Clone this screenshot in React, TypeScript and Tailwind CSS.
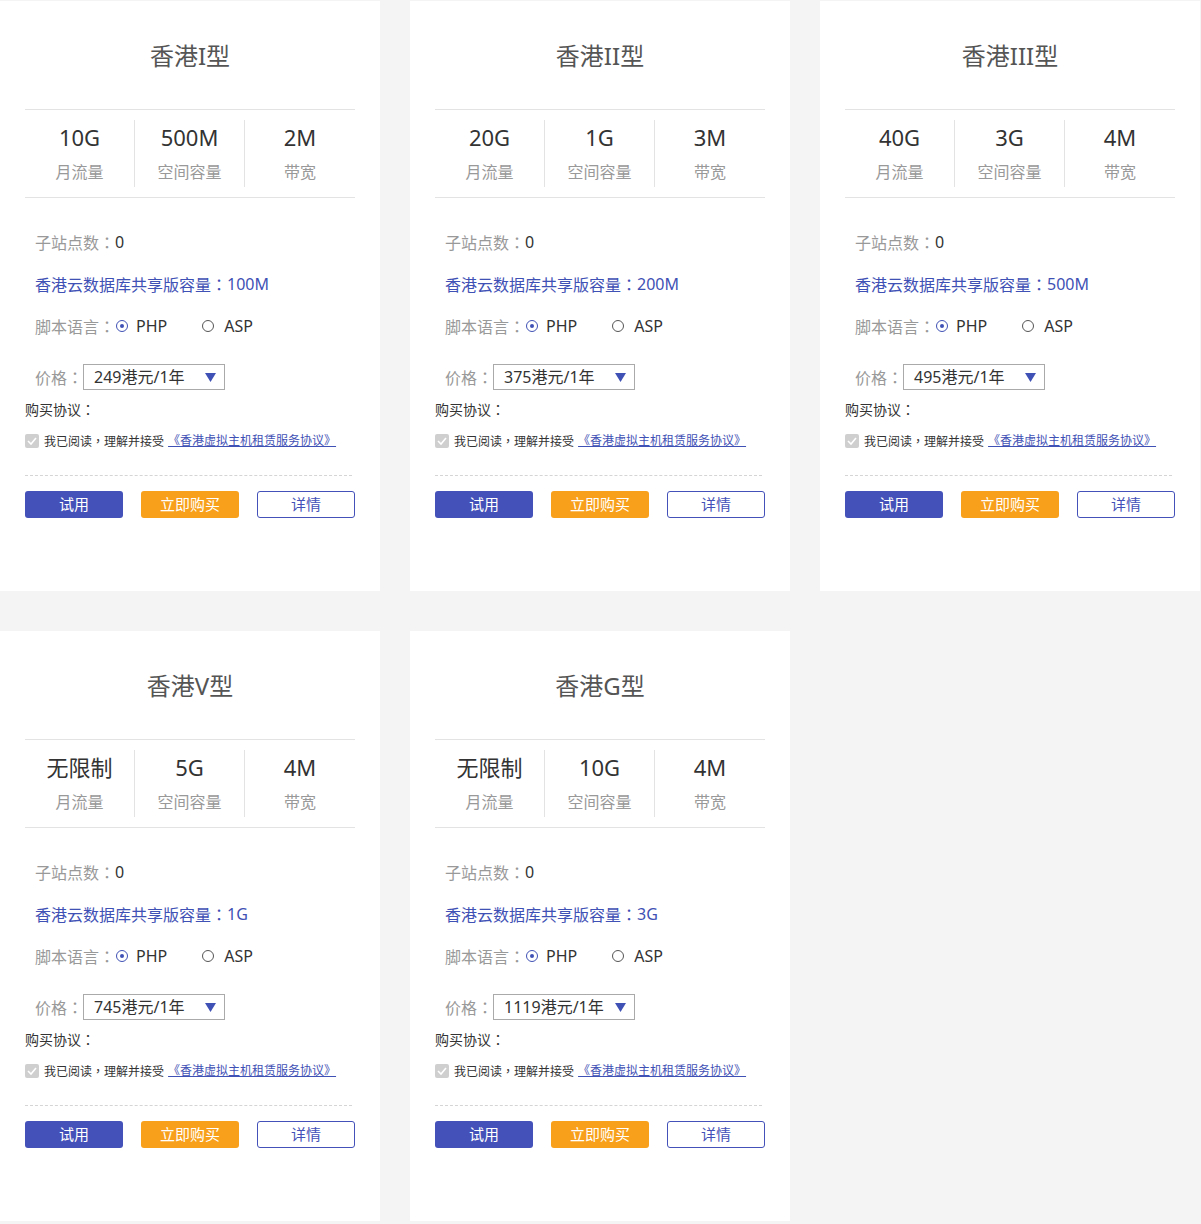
import React from "react";

type Plan = {
  name: string;
  stats: [string, string, string];
  db: string;
  price: string;
};

const plans: Plan[] = [
  { name: "香港I型", stats: ["10G", "500M", "2M"], db: "100M", price: "249港元/1年" },
  { name: "香港II型", stats: ["20G", "1G", "3M"], db: "200M", price: "375港元/1年" },
  { name: "香港III型", stats: ["40G", "3G", "4M"], db: "500M", price: "495港元/1年" },
  { name: "香港V型", stats: ["无限制", "5G", "4M"], db: "1G", price: "745港元/1年" },
  { name: "香港G型", stats: ["无限制", "10G", "4M"], db: "3G", price: "1119港元/1年" },
];

const labels = ["月流量", "空间容量", "带宽"];

const tc = { fontFamily: '"Noto Sans CJK TC", sans-serif' };

function Colon() {
  return <span style={tc}>：</span>;
}

function Card({ p }: { p: Plan }) {
  return (
    <div className="w-[380px] h-[590px] bg-white px-[25px]">
      <div className="pt-[37px] text-center text-[24px] leading-[36px] text-[#555]">{p.name}</div>
      <div className="mt-[35px] border-t border-b border-[#e3e3e3] py-[10px] flex">
        {p.stats.map((s, i) => (
          <div
            key={i}
            className={
              "w-[110px] h-[67px] pt-[3px] flex flex-col items-center " +
              (i < 2 ? "border-r border-[#e3e3e3]" : "")
            }
          >
            <div className="text-[22px] leading-[28px] text-[#333]">{s}</div>
            <div className="mt-[11px] text-[16px] leading-[20px] text-[#999]">{labels[i]}</div>
          </div>
        ))}
      </div>
      <div className="px-[10px] text-[16px] leading-[20px]">
        <div className="mt-[34px] h-[20px] flex items-center whitespace-pre">
          <span className="text-[#999]">子站点数<Colon /></span>
          <span className="text-[#333]">0</span>
        </div>
        <div className="mt-[22px] h-[20px] flex items-center whitespace-pre text-[#3f51b5]">
          <span>香港云数据库共享版容量<Colon /></span>
          <span>{p.db}</span>
        </div>
        <div className="mt-[22px] h-[20px] flex items-center">
          <span className="text-[#999]">脚本语言<Colon /></span>
          <span className="ml-[1px] w-[12px] h-[12px] rounded-full border border-[#3f51b5] flex items-center justify-center">
            <span className="w-[4px] h-[4px] rounded-full bg-[#3f51b5]" />
          </span>
          <span className="ml-[8px] text-[#333]">PHP</span>
          <span className="ml-[35px] w-[12px] h-[12px] rounded-full border border-[#555]" />
          <span className="ml-[10px] text-[#333]">ASP</span>
        </div>
        <div className="mt-[28px] flex items-center h-[26px]">
          <span className="text-[16px] text-[#999]">价格<Colon /></span>
          <div className="w-[142px] h-[26px] border border-[#aaa] flex items-center justify-between pl-[10px] pr-[8px]">
            <span className="text-[16px] text-[#333]">{p.price}</span>
            <svg width="11" height="9" viewBox="0 0 11 9">
              <polygon points="0,0 11,0 5.5,9" fill="#3f51b5" />
            </svg>
          </div>
        </div>
      </div>
      <div className="mt-[9px] h-[20px] flex items-center text-[14px] text-[#333]">
        <span>购买协议<Colon /></span>
      </div>
      <div className="mt-[12px] h-[20px] flex items-center text-[12px]">
        <span className="w-[14px] h-[14px] bg-[#cfcfcf] rounded-[2px] flex items-center justify-center">
          <svg width="10" height="8" viewBox="0 0 10 8">
            <polyline points="1,4 4,7 9,1" fill="none" stroke="#fff" strokeWidth="1.6" />
          </svg>
        </span>
        <span className="ml-[5px] text-[#333]">
          我已阅读<span style={tc}>，</span>理解并接受
        </span>
        <span className="ml-[4px] text-[#3f51b5] underline">《香港虚拟主机租赁服务协议》</span>
      </div>
      <div className="mt-[24px] mr-[3px] border-t border-dashed border-[#d5d5d5]" />
      <div className="mt-[15px] flex justify-between">
        <button className="w-[98px] h-[27px] rounded-[3px] bg-[#4351b8] text-white text-[15px] leading-[27px]">试用</button>
        <button className="w-[98px] h-[27px] rounded-[3px] bg-[#f8a01b] text-white text-[15px] leading-[27px]">立即购买</button>
        <button className="w-[98px] h-[27px] rounded-[3px] border border-[#4351b8] bg-white text-[#4351b8] text-[15px] leading-[25px]">详情</button>
      </div>
    </div>
  );
}

export default function App() {
  return (
    <div
      className="w-[1201px] min-h-[1224px] bg-[#f4f4f4] pt-[1px]"
      style={{ fontFamily: '"Noto Sans", "Noto Sans CJK SC", sans-serif' }}
    >
      <div className="flex flex-wrap gap-x-[30px] gap-y-[40px] w-[1200px]">
        {plans.map((p) => (
          <Card key={p.name} p={p} />
        ))}
      </div>
    </div>
  );
}
